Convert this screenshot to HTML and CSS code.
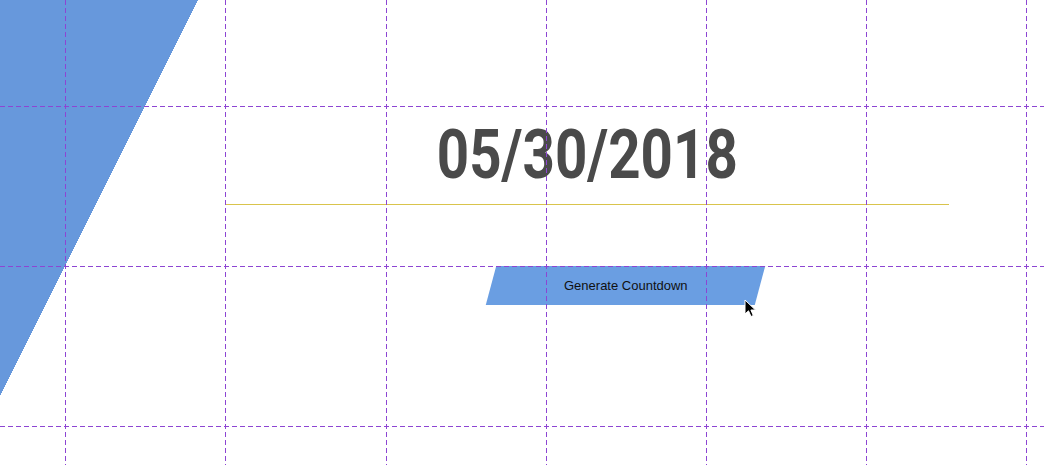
FILE: index.html
```html
<!DOCTYPE html>
<html>
<head>
<meta charset="utf-8">
<link rel="stylesheet" href="styles.css">
</head>
<body>
<main class="content">
  <div class="date-block">
    <h1 class="date"><span class="date-text">05/30/2018</span></h1>
  </div>
  <button class="generate"><span class="generate-label">Generate Countdown</span></button>
</main>
<svg class="grid" width="1044" height="465" viewBox="0 0 1044 465" shape-rendering="crispEdges">
  <g stroke="#8d45d3" stroke-width="1.2" stroke-dasharray="5 3" fill="none">
    <line x1="65.5" y1="0" x2="65.5" y2="465"/>
    <line x1="225.5" y1="0" x2="225.5" y2="465"/>
    <line x1="386.5" y1="0" x2="386.5" y2="465"/>
    <line x1="546.5" y1="0" x2="546.5" y2="465"/>
    <line x1="706.5" y1="0" x2="706.5" y2="465"/>
    <line x1="866.5" y1="0" x2="866.5" y2="465"/>
    <line x1="1026.5" y1="0" x2="1026.5" y2="465"/>
    <line x1="0" y1="106.5" x2="1044" y2="106.5"/>
    <line x1="0" y1="266.5" x2="1044" y2="266.5"/>
    <line x1="0" y1="426.5" x2="1044" y2="426.5"/>
  </g>
</svg>
<svg class="cursor" width="14" height="20" viewBox="0 0 14 20">
  <path d="M1 1 L1 15 L4.5 11.8 L7 17.5 L9.3 16.5 L6.9 11 L11.5 11 Z" fill="#000" stroke="#fff" stroke-width="1" stroke-linejoin="round"/>
</svg>
</body>
</html>
```
FILE: styles.css
```css
html, body {
  margin: 0;
  padding: 0;
}
body {
  width: 1044px;
  height: 465px;
  overflow: hidden;
  position: relative;
  background-color: #ffffff;
  background-image: linear-gradient(to bottom right, #6798dc 50%, rgba(103,152,220,0) 50%);
  background-size: 198px 396px;
  background-repeat: no-repeat;
  background-position: 0 0;
  font-family: "Liberation Sans", Arial, sans-serif;
}
.content {
  display: flex;
  flex-direction: column;
  align-items: flex-start;
  margin-left: 225px;
  width: 724px;
  padding-top: 120px;
}
.date-block {
  width: 100%;
  height: 84px;
  border-bottom: 1px solid #d9c44c;
  display: flex;
  justify-content: center;
}
.date {
  margin: 0;
  font-family: Roboto, "Liberation Sans", sans-serif;
  font-weight: 700;
  font-size: 68px;
  line-height: 70px;
  color: #4a4a4a;
}
.date-text {
  display: inline-block;
  transform: scaleX(0.83);
  letter-spacing: 0;
}
.generate {
  margin-top: 61px;
  margin-left: 266px;
  width: 269px;
  height: 39px;
  padding: 0;
  border: none;
  background: #6a9ee2;
  transform: skewX(-15deg);
  display: flex;
  align-items: center;
  justify-content: center;
  font-family: "Liberation Sans", Arial, sans-serif;
  font-size: 13px;
  color: #111;
}
.generate-label {
  display: inline-block;
  transform: skewX(15deg);
}
.grid {
  position: absolute;
  left: 0;
  top: 0;
  pointer-events: none;
}
.cursor {
  position: absolute;
  left: 744px;
  top: 299px;
  pointer-events: none;
}
```
